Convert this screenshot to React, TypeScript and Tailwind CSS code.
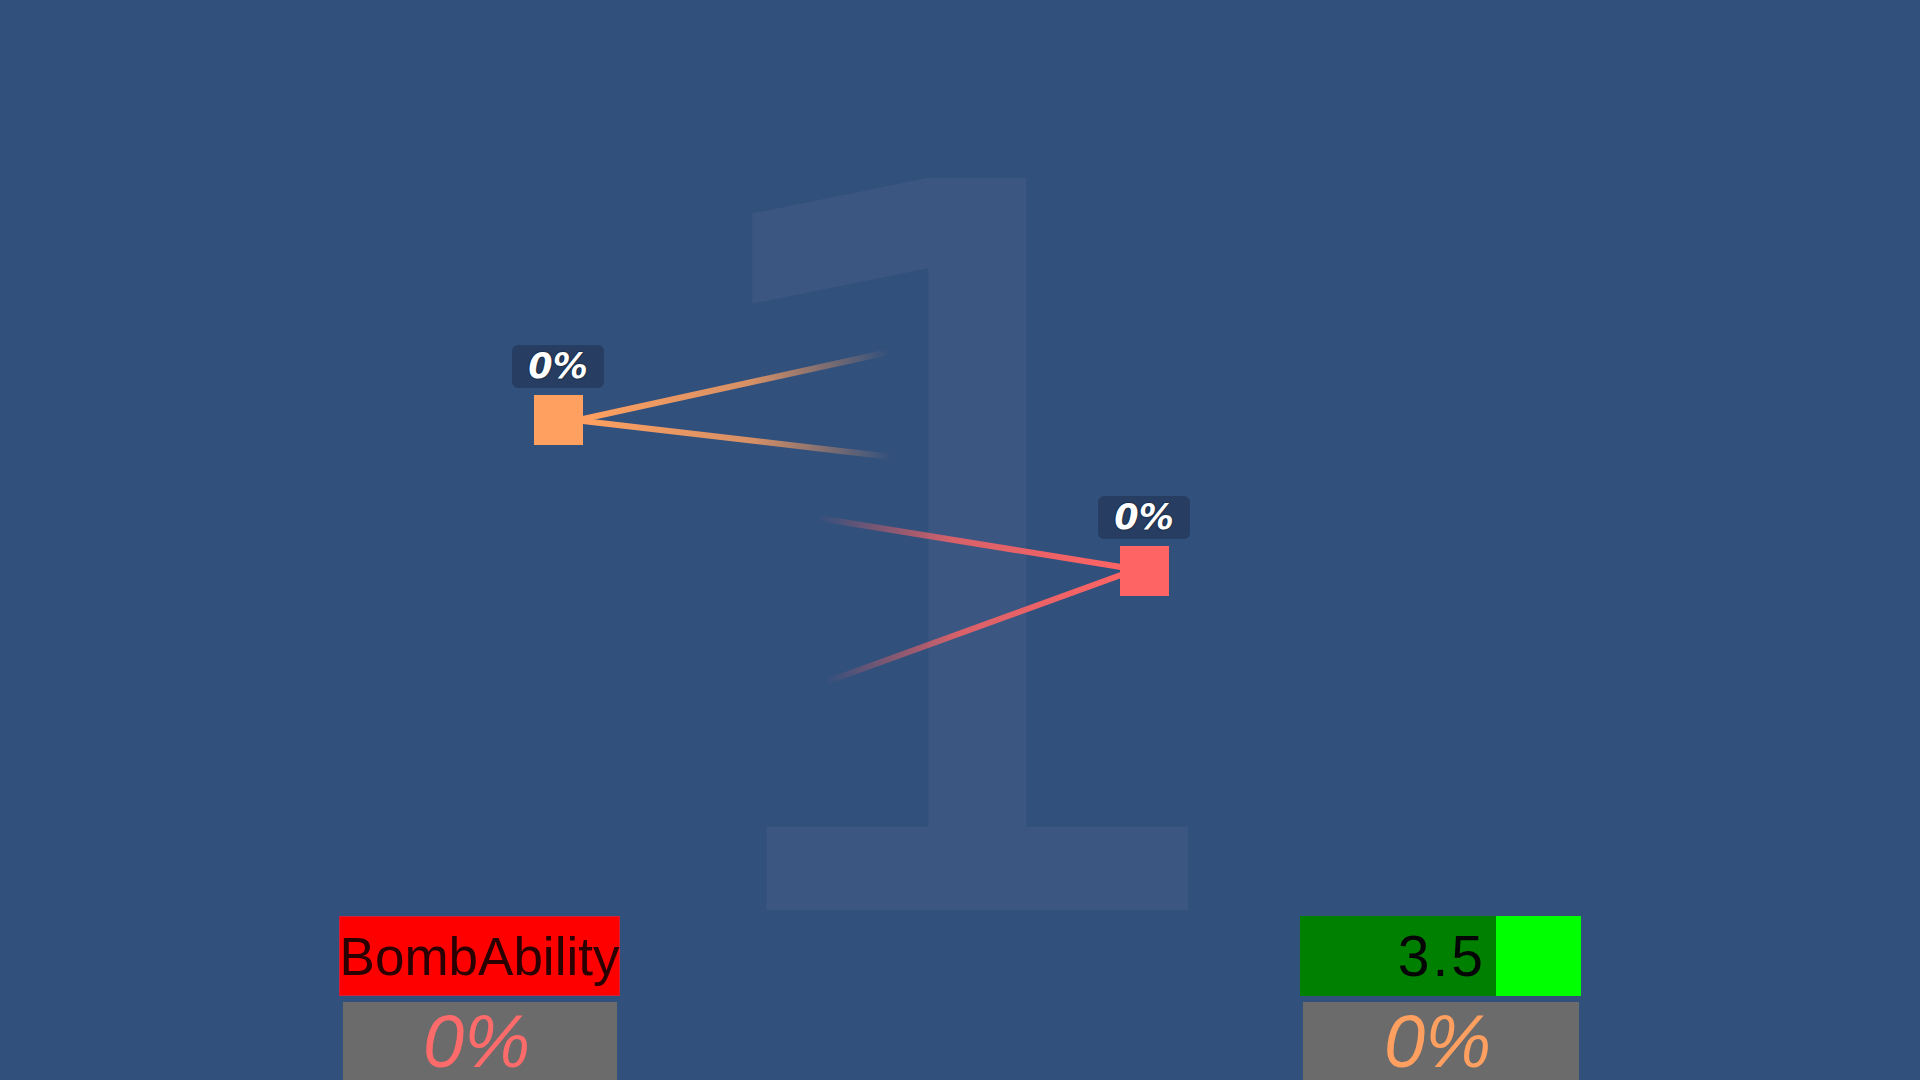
import React from 'react';

interface Beam {
  id: string;
  x1: number;
  y1: number;
  x2: number;
  y2: number;
  color: string;
}

interface Node {
  id: string;
  x: number;
  y: number;
  color: string;
  label: string;
}

const beams: Beam[] = [
  { id: 'o1', x1: 583, y1: 419, x2: 889, y2: 352, color: '#ffa060' },
  { id: 'o2', x1: 583, y1: 421, x2: 892, y2: 457, color: '#ffa060' },
  { id: 'r1', x1: 1121, y1: 567, x2: 818, y2: 518, color: '#ff6464' },
  { id: 'r2', x1: 1121, y1: 575, x2: 826, y2: 682, color: '#ff6464' },
];

const nodes: Node[] = [
  { id: 'orange', x: 534, y: 395, color: 'bg-[#ffa060]', label: '0%' },
  { id: 'red', x: 1120, y: 546, color: 'bg-[#ff6464]', label: '0%' },
];

const Beams: React.FC = () => (
  <svg className="absolute inset-0" width={1920} height={1080}>
    <defs>
      {beams.map(b => (
        <linearGradient key={b.id} id={`g-${b.id}`} gradientUnits="userSpaceOnUse" x1={b.x1} y1={b.y1} x2={b.x2} y2={b.y2}>
          <stop offset="0" stopColor={b.color} stopOpacity="1" />
          <stop offset="0.55" stopColor={b.color} stopOpacity="0.8" />
          <stop offset="1" stopColor={b.color} stopOpacity="0" />
        </linearGradient>
      ))}
    </defs>
    {beams.map(b => (
      <line key={b.id} x1={b.x1} y1={b.y1} x2={b.x2} y2={b.y2} stroke={`url(#g-${b.id})`} strokeWidth={6} strokeLinecap="butt" />
    ))}
  </svg>
);

const Unit: React.FC<{ node: Node }> = ({ node }) => (
  <div className="absolute flex flex-col items-center" style={{ left: node.x - 22, top: node.y - 50 }}>
    <div className="w-[92px] h-[43px] rounded-md bg-[#263c5f]/90 flex items-center justify-center font-['DejaVu_Sans',sans-serif] font-bold italic text-[35px] leading-none text-white [text-shadow:0_0_2px_#0d1b30,0_0_1px_#0d1b30]">
      {node.label}
    </div>
    <div className={`mt-[7px] w-[49px] h-[50px] ${node.color} self-start ml-[22px]`} />
  </div>
);

const AbilityPanel: React.FC = () => (
  <div className="flex flex-col items-center">
    <div className="w-[281px] h-[80px] bg-[#ff0000] border border-[#d0203a] flex items-center justify-center font-['Liberation_Sans',Arial,sans-serif] text-[53px] leading-none text-[#2a0000] whitespace-nowrap overflow-visible">
      BombAbility
    </div>
    <div className="mt-[6px] w-[274px] h-[78px] bg-[#6b6b6b] flex items-start justify-center pt-[3px] pr-[6px] font-['Liberation_Sans',Arial,sans-serif] italic text-[74px] leading-none text-[#ff6b6b]">
      0%
    </div>
  </div>
);

const CooldownPanel: React.FC = () => (
  <div className="flex flex-col items-center">
    <div className="w-[281px] h-[80px] flex">
      <div className="flex-1 bg-[#008000] flex items-center justify-end pr-[10px] font-['Liberation_Sans',Arial,sans-serif] text-[57px] leading-none tracking-[3px] text-[#050505]">
        3.5
      </div>
      <div className="w-[85px] bg-[#00ff00]" />
    </div>
    <div className="mt-[6px] w-[276px] h-[78px] bg-[#6b6b6b] flex items-start justify-center pt-[3px] pr-[6px] font-['Liberation_Sans',Arial,sans-serif] italic text-[74px] leading-none text-[#ffa060]">
      0%
    </div>
  </div>
);

export default function App() {
  return (
    <div className="relative w-[1920px] h-[1080px] overflow-hidden bg-[#32507c] flex flex-col justify-end">
      <div className="absolute left-[642px] top-[61px] font-['DejaVu_Sans',sans-serif] text-[1004px] leading-none text-[#3b5681] select-none">
        1
      </div>
      <Beams />
      {nodes.map(n => (
        <Unit key={n.id} node={n} />
      ))}
      <div className="relative flex pl-[339px] gap-[680px]">
        <AbilityPanel />
        <CooldownPanel />
      </div>
    </div>
  );
}
